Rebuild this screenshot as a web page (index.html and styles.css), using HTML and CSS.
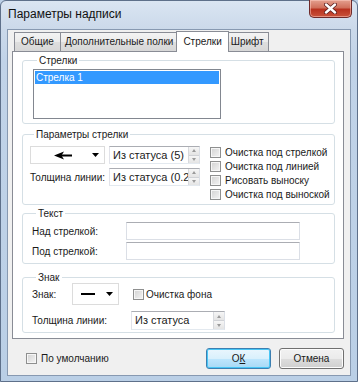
FILE: index.html
```html
<!DOCTYPE html>
<html lang="ru">
<head>
    <meta charset="UTF-8">
    <title>Параметры надписи</title>
    <link rel="stylesheet" href="styles.css">
</head>
<body>

<div class="window">
    <div class="titlebar">
        <span class="title">Параметры надписи</span>
        <button class="close">
            <svg width="13" height="11" viewBox="0 0 13 11">
                <path d="M2 1.5 L11 9.5 M11 1.5 L2 9.5" stroke="#5a1c1c" stroke-width="4" stroke-linecap="round"/>
                <path d="M2 1.5 L11 9.5 M11 1.5 L2 9.5" stroke="#fff" stroke-width="2.4" stroke-linecap="round"/>
            </svg>
        </button>
    </div>

    <div class="client">
        <div class="tabs">
            <div class="tab">Общие</div>
            <div class="tab">Дополнительные полки</div>
            <div class="tab active">Стрелки</div>
            <div class="tab">Шрифт</div>
        </div>

        <div class="panel">
            <fieldset class="group arrows">
                <legend>Стрелки</legend>
                <div class="listbox">
                    <div class="item selected">Стрелка 1</div>
                </div>
            </fieldset>

            <fieldset class="group params">
                <legend>Параметры стрелки</legend>
                <div class="params-body">
                    <div class="params-grid">
                        <div class="combo arrow-combo">
                            <svg class="glyph" width="18" height="9" viewBox="0 0 18 9">
                                <polygon points="0,4.5 10,0.5 7.5,4.5 10,8.5" fill="#000"/>
                                <rect x="4" y="3.5" width="14" height="2" fill="#000"/>
                            </svg>
                            <svg class="drop" width="7" height="4" viewBox="0 0 7 4"><polygon points="0,0 7,0 3.5,4" fill="#000"/></svg>
                        </div>
                        <div class="spin">
                            <span class="spin-text">Из статуса (5)</span>
                            <span class="spin-btns"><span class="up"></span><span class="down"></span></span>
                        </div>
                        <span class="label">Толщина линии:</span>
                        <div class="spin">
                            <span class="spin-text">Из статуса (0.25)</span>
                            <span class="spin-btns"><span class="up"></span><span class="down"></span></span>
                        </div>
                    </div>
                    <div class="checks">
                        <label class="check"><span class="box"></span>Очистка под стрелкой</label>
                        <label class="check"><span class="box"></span>Очистка под линией</label>
                        <label class="check"><span class="box"></span>Рисовать выноску</label>
                        <label class="check"><span class="box"></span>Очистка под выноской</label>
                    </div>
                </div>
            </fieldset>

            <fieldset class="group text">
                <legend>Текст</legend>
                <div class="text-grid">
                    <span class="label">Над стрелкой:</span>
                    <div class="edit"></div>
                    <span class="label">Под стрелкой:</span>
                    <div class="edit"></div>
                </div>
            </fieldset>

            <fieldset class="group sign">
                <legend>Знак</legend>
                <div class="sign-row">
                    <span class="label sign-label">Знак:</span>
                    <div class="combo sign-combo">
                        <svg class="glyph" width="14" height="2" viewBox="0 0 14 2"><rect width="14" height="2" fill="#000"/></svg>
                        <svg class="drop" width="7" height="4" viewBox="0 0 7 4"><polygon points="0,0 7,0 3.5,4" fill="#000"/></svg>
                    </div>
                    <label class="check sign-check"><span class="box"></span>Очистка фона</label>
                </div>
                <div class="sign-row second">
                    <span class="label width-label">Толщина линии:</span>
                    <div class="spin sign-spin">
                        <span class="spin-text">Из статуса</span>
                        <span class="spin-btns"><span class="up"></span><span class="down"></span></span>
                    </div>
                </div>
            </fieldset>
        </div>

        <div class="footer">
            <label class="check default-check"><span class="box"></span>По умолчанию</label>
            <button class="btn ok">О<u>К</u></button>
            <button class="btn cancel">Отмена</button>
        </div>
    </div>
</div>

</body>
</html>
```

FILE: styles.css
```css
* {
    margin: 0;
    padding: 0;
    box-sizing: border-box;
}

body {
    width: 358px;
    height: 382px;
    overflow: hidden;
    font-family: "Liberation Sans", Arial, sans-serif;
    font-size: 10px;
    color: #1a1a1a;
    background: #bcd0e7;
}

.window {
    height: 382px;
    display: flex;
    flex-direction: column;
    border: 1px solid #5e708a;
    border-radius: 6px 6px 0 0;
    background: linear-gradient(to bottom, #dae5f2 0, #cbd9ea 28px, #c1d3e8 60px, #bacfe6 100%);
}

/* title bar */
.titlebar {
    height: 28px;
    display: flex;
    align-items: flex-start;
    padding-left: 7px;
}

.title {
    font-size: 12px;
    margin-top: 6px;
    color: #111;
}

.close {
    margin: -1px 5px 0 auto;
    width: 43px;
    height: 18px;
    border: 1px solid #6e2a2a;
    border-top: none;
    border-radius: 0 0 5px 5px;
    background: linear-gradient(to bottom, #e4a08f 0, #d0705c 45%, #b8321f 55%, #c9523a 100%);
    box-shadow: inset 0 0 0 1px rgba(255, 210, 200, 0.5);
    display: flex;
    align-items: center;
    justify-content: center;
}

/* client area */
.client {
    flex: 1;
    margin: 0 6px 5px 6px;
    background: #f0f0f0;
    border: 1px solid #8799b1;
    padding: 0 6px 0 4px;
    display: flex;
    flex-direction: column;
}

.tabs {
    margin-top: 1px;
    height: 21px;
    display: flex;
    align-items: flex-end;
    padding-left: 2px;
    position: relative;
    z-index: 2;
}

.tab {
    height: 19px;
    margin-bottom: 1px;
    margin-left: -1px;
    padding: 0 4px;
    line-height: 18px;
    border: 1px solid #898c95;
    border-bottom: none;
    background: linear-gradient(to bottom, #f3f3f3, #ebebeb 50%, #dedede 51%, #d7d7d7);
    white-space: nowrap;
}

.tab:first-child {
    margin-left: 0;
    padding: 0 6px;
}

.tab.active {
    height: 21px;
    margin: 0 -2px;
    padding: 0 6px;
    line-height: 19px;
    background: #fff;
    position: relative;
    z-index: 3;
}

.panel {
    flex: 0 0 288px;
    margin-top: -1px;
    border: 1px solid #898c95;
    background: #fff;
    padding: 2px 8px 0 9px;
}

.label {
    white-space: nowrap;
}

/* group boxes */
.group {
    border: 1px solid #d5dfe5;
    border-radius: 3px;
}

.group legend {
    margin-left: 4px;
    padding: 0 2px;
    line-height: 13px;
}

.arrows {
    padding: 2px 0 4px 10px;
}

.listbox {
    width: 188px;
    height: 50px;
    border: 1px solid #828790;
    background: #fff;
    padding: 1px;
}

.item {
    height: 13px;
    line-height: 13px;
    padding-left: 1px;
}

.item.selected {
    background: #3399ff;
    color: #fff;
}

.params {
    margin-top: 4px;
    padding: 4px 0 3px 7px;
}

.params-body {
    display: flex;
    align-items: flex-start;
}

.params-grid {
    margin-top: 1px;
    display: grid;
    grid-template-columns: 75px 91px;
    grid-auto-rows: 18px;
    column-gap: 4px;
    row-gap: 4px;
    align-items: center;
}

.checks {
    margin-left: 10px;
    display: flex;
    flex-direction: column;
}

.check {
    display: flex;
    align-items: center;
    gap: 4px;
    height: 14px;
    white-space: nowrap;
}

.box {
    width: 11px;
    height: 11px;
    border: 1px solid #8e8f8f;
    background: linear-gradient(135deg, #d2d2d2, #f4f4f4);
    box-shadow: inset 0 0 0 1px #f6f6f6;
    flex: none;
}

.combo {
    height: 18px;
    border: 1px solid #dcdcdc;
    background: #fff;
    display: flex;
    align-items: center;
}

.arrow-combo .glyph {
    margin-left: 23px;
}

.arrow-combo .drop {
    margin-left: auto;
    margin-right: 5px;
}

.spin {
    height: 18px;
    border: 1px solid #abadb3;
    border-color: #abadb3 #dbdfe6 #e3e9ef #e2e3ea;
    background: #fff;
    display: flex;
    overflow: hidden;
}

.spin-text {
    flex: 1;
    padding-left: 3px;
    line-height: 16px;
    font-size: 11px;
    white-space: nowrap;
    overflow: hidden;
}

.spin-btns {
    width: 11px;
    flex: none;
    display: flex;
    flex-direction: column;
    border-left: 1px solid #d8dade;
}

.spin-btns span {
    flex: 1;
    background: linear-gradient(to bottom, #f6f6f6, #e4e4e4);
    border-bottom: 1px solid #d0d2d6;
    display: flex;
    align-items: center;
    justify-content: center;
}

.spin-btns span:last-child {
    border-bottom: none;
}

.spin-btns .up::after,
.spin-btns .down::after {
    content: '';
    border-left: 2.5px solid transparent;
    border-right: 2.5px solid transparent;
}

.spin-btns .up::after {
    border-bottom: 3px solid #9a9a9a;
}

.spin-btns .down::after {
    border-top: 3px solid #9a9a9a;
}

/* text group */
.text {
    margin-top: 2px;
    padding: 2px 0 3px 9px;
}

.text-grid {
    display: grid;
    grid-template-columns: 94px 174px;
    grid-auto-rows: 18px;
    row-gap: 2px;
    align-items: center;
}

.edit {
    height: 18px;
    border: 1px solid #dbdfe6;
    border-top-color: #abadb3;
    background: #fff;
}

/* sign group */
.sign {
    margin-top: 7px;
    padding: 0 0 2px 9px;
}

.sign-row {
    display: flex;
    align-items: center;
}

.sign-label {
    width: 40px;
}

.sign-combo {
    margin-top: -1px;
    width: 47px;
    height: 22px;
}

.sign-combo .glyph {
    margin-left: 8px;
}

.sign-combo .drop {
    margin-left: auto;
    margin-right: 5px;
}

.sign-check {
    margin-left: 14px;
    gap: 2px;
}

.sign-row.second {
    margin-top: 6px;
}

.width-label {
    width: 99px;
}

.sign-spin {
    width: 94px;
    height: 19px;
}

/* footer */
.footer {
    margin-top: 9px;
    height: 21px;
    display: flex;
    align-items: center;
}

.default-check {
    margin-left: 14px;
}

.btn {
    width: 65px;
    height: 21px;
    font-family: inherit;
    font-size: 10px;
    color: #1a1a1a;
    border: 1px solid #707070;
    border-radius: 3px;
    background: linear-gradient(to bottom, #f2f2f2, #ebebeb 50%, #dddddd 51%, #cfcfcf);
    box-shadow: inset 0 0 0 1px #fcfcfc;
}

.ok {
    margin-left: auto;
    border-color: #3c7fb1;
    background: linear-gradient(to bottom, #eaf6fd, #d9f0fc 50%, #bee6fd 51%, #a7d9f5);
    box-shadow: inset 0 0 0 1px #48c6f5;
}

.cancel {
    margin-left: 8px;
}
```
